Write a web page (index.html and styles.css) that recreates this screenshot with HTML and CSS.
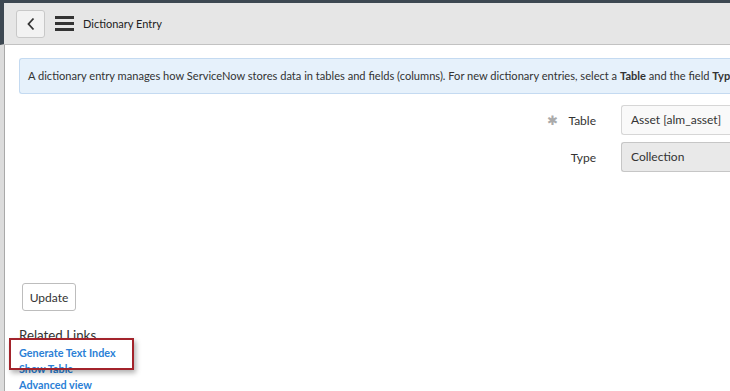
FILE: index.html
```html
<!DOCTYPE html>
<html>
<head>
<meta charset="utf-8">
<link rel="stylesheet" href="styles.css">
</head>
<body>
<div class="topbar"></div>
<div class="app">
  <div class="header">
    <button class="back" aria-label="Back">
      <svg width="10" height="14" viewBox="0 0 10 14"><path d="M7.5 1.5 L2.5 7 L7.5 12.5" fill="none" stroke="#333" stroke-width="1.8"/></svg>
    </button>
    <div class="burger"><span></span><span></span><span></span></div>
    <div class="title">Dictionary Entry</div>
  </div>
  <div class="body">
    <div class="gutter"></div>
    <div class="content">
      <div class="info">A dictionary entry manages how ServiceNow stores data in tables and fields (columns). For new dictionary entries, select a <b>Table</b> and the field <b>Type</b> of the new entry.</div>
      <div class="form">
        <div class="row">
          <div class="label"><span class="req">&#10033;</span>Table</div>
          <div class="input">Asset [alm_asset]</div>
        </div>
        <div class="row">
          <div class="label">Type</div>
          <div class="input select">Collection</div>
        </div>
      </div>
      <div class="actions"><button class="btn">Update</button></div>
      <div class="related">
        <div class="rel-title">Related Links</div>
        <a class="link">Generate Text Index</a>
        <a class="link">Show Table</a>
        <a class="link">Advanced view</a>
        <div class="highlight"></div>
      </div>
    </div>
  </div>
</div>
</body>
</html>
```
FILE: styles.css
```css
* { box-sizing: border-box; }
html, body { margin: 0; padding: 0; }
body {
  width: 730px;
  height: 391px;
  overflow: hidden;
  background: #fff;
  font-family: "Lato", "Open Sans", sans-serif;
  color: #333;
}
.topbar { height: 3px; background: #3d4852; }
.app { display: flex; flex-direction: column; }
.header {
  height: 42px;
  background: #e6e6e6;
  border-bottom: 1px solid #c2c2c2;
  border-left: 4px solid #3d4852;
  display: flex;
  align-items: center;
  padding-left: 12px;
}
.back {
  width: 29px;
  height: 28px;
  background: #f2f2f2;
  border: 1px solid #c8c8c8;
  border-radius: 3px;
  padding: 0;
  display: flex;
  align-items: center;
  justify-content: center;
}
.burger {
  margin-left: 10px;
  width: 19px;
  display: flex;
  flex-direction: column;
  gap: 3px;
}
.burger span { display: block; height: 3px; background: #333; }
.title {
  margin-left: 9px;
  font-size: 11px;
  color: #222;
}
.body { display: flex; height: 346px; }
.gutter {
  flex: 0 0 5px;
  background: #dcdcdc;
  border-right: 1px solid #a9a9a9;
}
.content { flex: 1; min-width: 0; padding-left: 14px; position: relative; }
.info {
  margin-top: 13px;
  height: 36px;
  background: #e6f1fb;
  border: 1px solid #c4daf1;
  border-right: none;
  border-radius: 3px 0 0 3px;
  padding: 0 0 0 8px;
  font-size: 11.1px;
  line-height: 34px;
  white-space: nowrap;
  overflow: hidden;
  color: #333;
}
.info b { font-weight: 700; }
.form {
  margin-top: 11px;
  display: flex;
  flex-direction: column;
  gap: 7px;
}
.row { display: flex; align-items: center; }
.label {
  flex: 0 0 602px;
  text-align: right;
  font-size: 12px;
  padding-right: 25px;
  color: #333;
}
.req { color: #aaa; font-size: 13px; margin-right: 10px; }
.input {
  flex: 1;
  height: 30px;
  border: 1px solid #d6d6d6;
  border-right: none;
  border-radius: 3px 0 0 3px;
  background: #f9f9f9;
  font-size: 12px;
  line-height: 28px;
  padding-left: 9px;
  color: #333;
  white-space: nowrap;
  overflow: hidden;
}
.select { background: #e9e9e9; border-color: #c6c6c6; }
.actions { margin-top: 111px; padding-left: 3px; }
.btn {
  width: 54px;
  height: 28px;
  background: #fff;
  border: 1px solid #bdbdbd;
  border-radius: 3px;
  font-family: inherit;
  font-size: 12px;
  color: #333;
  padding: 0;
}
.related { margin-top: 15px; display: flex; flex-direction: column; position: relative; }
.rel-title { font-size: 13.3px; line-height: 18px; margin-bottom: 1px; color: #333; }
.link {
  font-size: 10.8px;
  font-weight: 700;
  line-height: 16px;
  color: #2b7fd6;
}
.highlight {
  position: absolute;
  left: -10px;
  top: 12px;
  width: 125px;
  height: 32px;
  border: 2px solid #a3232b;
  box-shadow: 2px 3px 5px rgba(0,0,0,0.3);
}
```
